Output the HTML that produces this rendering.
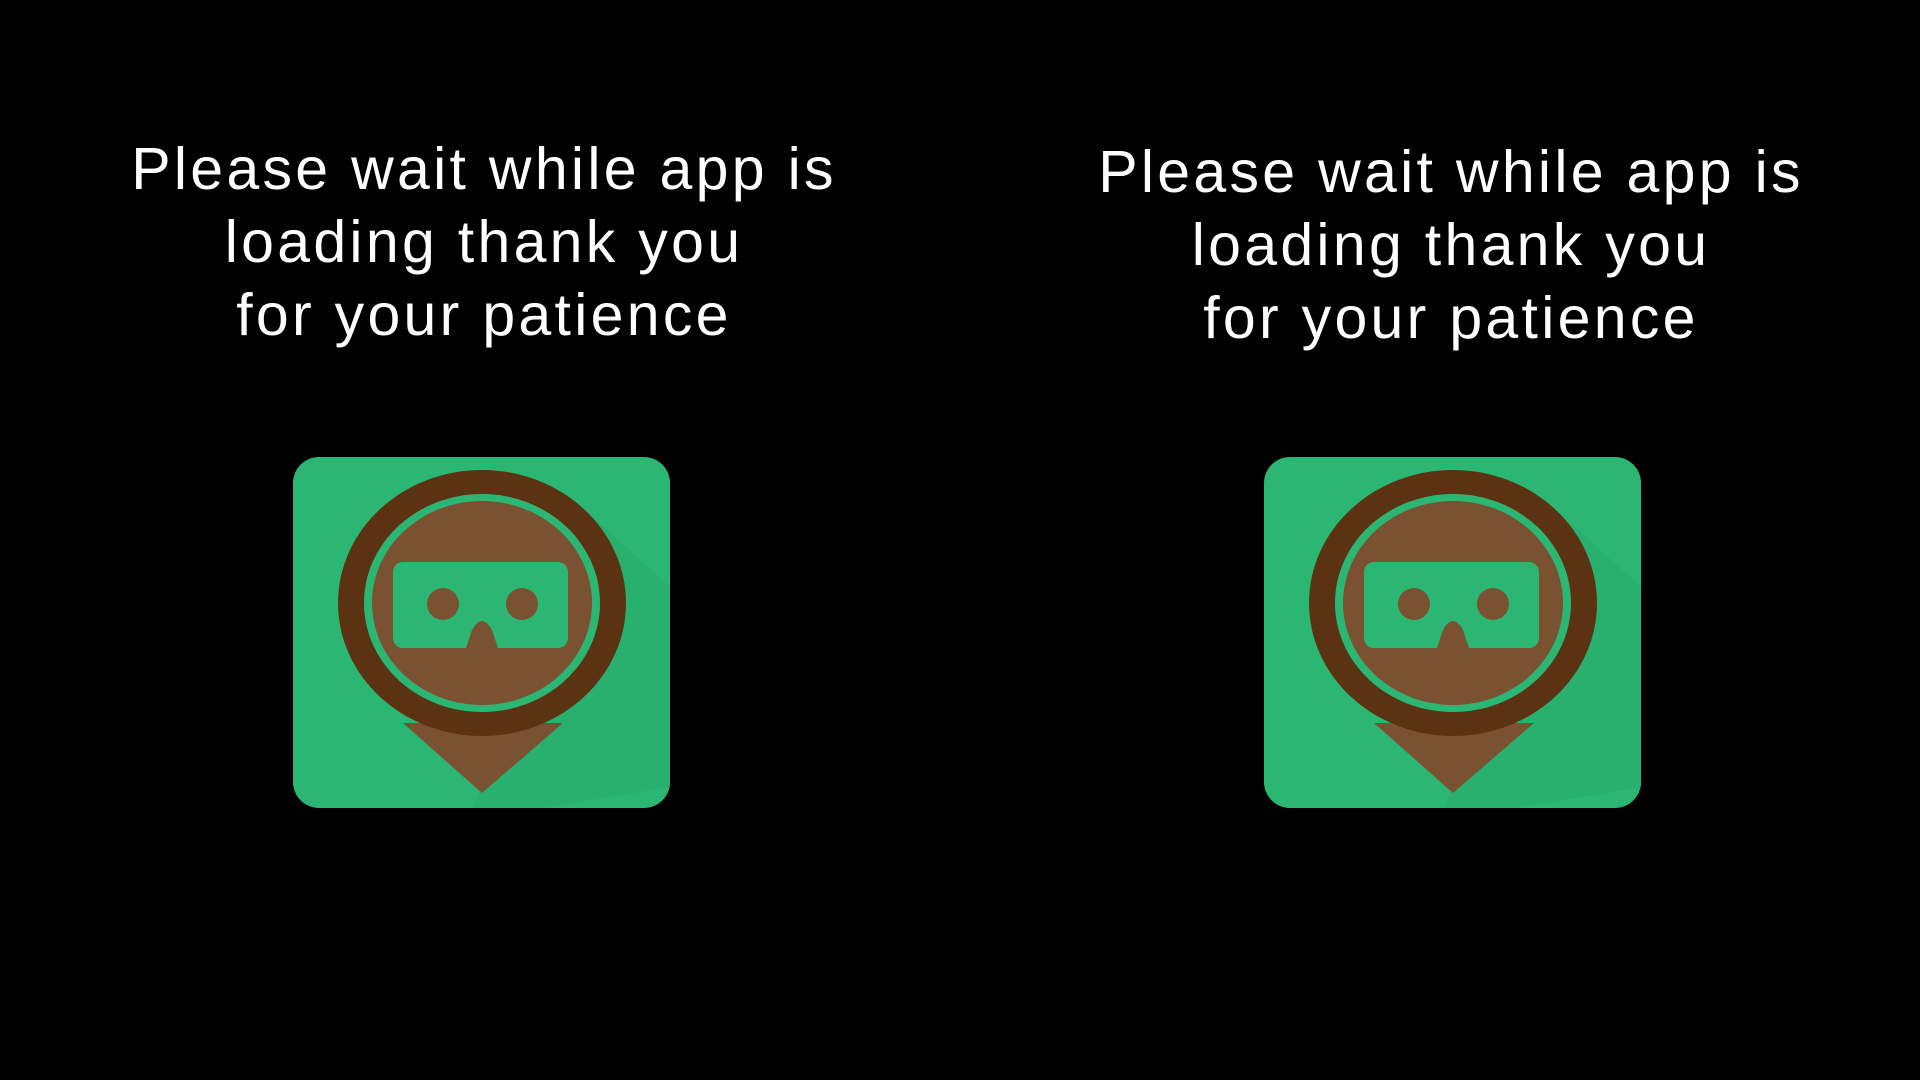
<!DOCTYPE html>
<html><head><meta charset="utf-8"><style>
html,body{margin:0;padding:0;background:#000;width:1920px;height:1080px;overflow:hidden}
.t{position:absolute;width:900px;text-align:center;color:#fff;font-family:"Liberation Sans",sans-serif;font-size:59px;line-height:73px;letter-spacing:3.3px}
.t div{height:73px}
svg{position:absolute}
</style></head><body>
<div class="t" style="left:34px;top:133px"><div>Please wait while app is</div><div>loading thank you</div><div>for your patience</div></div>
<div class="t" style="left:1001px;top:136px"><div>Please wait while app is</div><div>loading thank you</div><div>for your patience</div></div>
<svg width="0" height="0"><defs><g id="ic">
<rect x="0" y="0" width="377" height="351" rx="26" fill="#2bb673"/>
<polygon points="300,60 377,130 377,330 250,351 180,351" fill="#28ab6b" opacity="0.6"/>
<polygon points="110,266 270,266 189,336" fill="#7a5232"/>
<ellipse cx="189" cy="146" rx="144" ry="133" fill="#5c3312"/>
<ellipse cx="189" cy="146" rx="118" ry="109" fill="#2bb673"/>
<ellipse cx="189" cy="146" rx="110" ry="102" fill="#7a5232"/>
<path d="M110 105 h155 a10 10 0 0 1 10 10 v66 a10 10 0 0 1 -10 10 h-60 l-6 -18 q-10 -18 -20 0 l-6 18 h-63 a10 10 0 0 1 -10 -10 v-66 a10 10 0 0 1 10 -10z" fill="#2bb673"/>
<circle cx="150" cy="147" r="16" fill="#7a5232"/>
<circle cx="229" cy="147" r="16" fill="#7a5232"/>
</g></defs></svg>
<svg style="left:293px;top:457px" width="377" height="351"><use href="#ic"/></svg>
<svg style="left:1264px;top:457px" width="377" height="351"><use href="#ic"/></svg>
</body></html>
